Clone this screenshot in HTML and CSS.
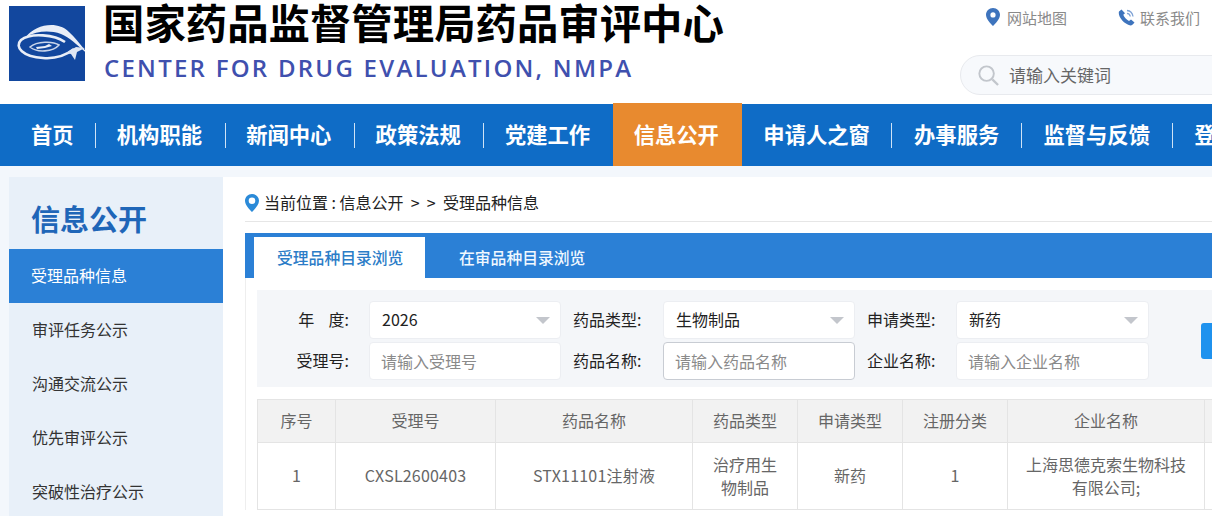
FILE: index.html
```html
<!DOCTYPE html>
<html lang="zh-CN">
<head>
<meta charset="utf-8">
<title>国家药品监督管理局药品审评中心</title>
<link rel="stylesheet" href="styles.css">
</head>
<body>
<header class="header">
  <svg class="logo" viewBox="0 0 76 75" aria-hidden="true">
    <rect width="76" height="75" fill="#12479e"/>
    <path d="M17 31C26 19 48 14 60 26C67 32 73 41 80 49C70 41 62 32 52 28C40 24 28 25 17 31Z" fill="#e9eef7"/>
    <path d="M56 36C46 29 22 26 12 34C5 41 14 51 34 52C46 53 56 50 65 43" fill="none" stroke="#e9eef7" stroke-width="2.6"/>
    <path d="M21 41C28 35 44 35 50 39C44 46 28 47 21 41Z" fill="none" stroke="#c9d5ea" stroke-width="1.6"/>
    <path d="M27 41L36 40L40 38L43 40L36 42L28 43Z" fill="#e9eef7"/>
    <path d="M57 47L67 41L76 42L68 46L66 54L62 48Z" fill="#dfe6f3"/>
  </svg>
  <div class="brand">
    <div class="brand-cn">国家药品监督管理局药品审评中心</div>
    <div class="brand-en">CENTER FOR DRUG EVALUATION, NMPA</div>
  </div>
  <div class="tools">
    <div class="links">
      <a class="link">
        <svg class="link-icon" viewBox="0 0 14 18" aria-hidden="true"><path fill-rule="evenodd" d="M7 0C3 0 0 3 0 6.800C0 11 4.500 15.500 7 18C9.500 15.500 14 11 14 6.800C14 3 11 0 7 0ZM7 4.300A2.600 2.600 0 1 1 7 9.500A2.600 2.600 0 1 1 7 4.300Z" fill="#3e74bd"/></svg>
        网站地图
      </a>
      <a class="link">
        <svg class="link-icon phone" viewBox="0 0 17 17" aria-hidden="true"><path d="M3.500 .5L1 2.500C-.5 7 5.500 15 12.500 16.500C14 16.500 15.500 15 16.500 13.500L13 10.500L11 12C8.500 11 6 8 5.300 5.800L7 4.200Z" fill="#3e74bd"/><path d="M9 1.500C12 1.800 14.500 4 15 7.500M9 4.300C10.800 4.500 12 5.800 12.300 7.500" fill="none" stroke="#7fa3d6" stroke-width="1.300"/></svg>
        联系我们
      </a>
    </div>
    <div class="search">
      <svg class="search-icon" viewBox="0 0 22 22" aria-hidden="true"><circle cx="9" cy="9" r="7.600" fill="none" stroke="#c2c6cc" stroke-width="2"/><path d="M15 15L21 21" stroke="#c2c6cc" stroke-width="2.400"/></svg>
      <input class="search-input" placeholder="请输入关键词">
    </div>
  </div>
</header>

<nav class="nav">
  <a class="nav-item nav-first">首页</a>
  <a class="nav-item nav-early">机构职能</a>
  <a class="nav-item nav-early">新闻中心</a>
  <a class="nav-item nav-early">政策法规</a>
  <a class="nav-item nav-early">党建工作</a>
  <a class="nav-item nav-active">信息公开</a>
  <a class="nav-item nav-after">申请人之窗</a>
  <a class="nav-item">办事服务</a>
  <a class="nav-item">监督与反馈</a>
  <a class="nav-item">登录</a>
</nav>

<div class="layout">
  <aside class="side">
    <h2 class="side-title">信息公开</h2>
    <a class="side-item side-active">受理品种信息</a>
    <a class="side-item">审评任务公示</a>
    <a class="side-item">沟通交流公示</a>
    <a class="side-item">优先审评公示</a>
    <a class="side-item">突破性治疗公示</a>
  </aside>
  <main class="main">
    <div class="crumb">
      <svg class="crumb-icon" viewBox="0 0 14 18" aria-hidden="true"><path fill-rule="evenodd" d="M7 0C3 0 0 3 0 6.800C0 11 4.500 15.500 7 18C9.500 15.500 14 11 14 6.800C14 3 11 0 7 0ZM7 3.500A3.300 3.300 0 1 1 7 10.100A3.300 3.300 0 1 1 7 3.500Z" fill="#2b8ad8"/></svg>
      <span>当前位置 : 信息公开 &nbsp;&gt;&nbsp;&nbsp;&gt;&nbsp; 受理品种信息</span>
    </div>
    <section class="panel">
      <div class="tabs">
        <a class="tab tab-active">受理品种目录浏览</a>
        <a class="tab">在审品种目录浏览</a>
      </div>
      <form class="filter">
        <label class="label label-first">年&nbsp;&nbsp;&nbsp;&nbsp;度:</label>
        <div class="select">2026<i class="arrow"></i></div>
        <label class="label">药品类型:</label>
        <div class="select">生物制品<i class="arrow"></i></div>
        <label class="label">申请类型:</label>
        <div class="select">新药<i class="arrow"></i></div>
        <button class="query" type="button">查询</button>
        <label class="label label-first">受理号:</label>
        <input class="field" placeholder="请输入受理号">
        <label class="label">药品名称:</label>
        <input class="field field-focus" placeholder="请输入药品名称">
        <label class="label">企业名称:</label>
        <input class="field" placeholder="请输入企业名称">
      </form>
      <table class="table">
        <colgroup>
          <col class="c-78"><col class="c-160"><col class="c-197"><col class="c-105"><col class="c-105"><col class="c-105"><col class="c-197"><col class="c-120">
        </colgroup>
        <thead>
          <tr><th>序号</th><th>受理号</th><th>药品名称</th><th>药品类型</th><th>申请类型</th><th>注册分类</th><th>企业名称</th><th></th></tr>
        </thead>
        <tbody>
          <tr><td>1</td><td class="latin">CXSL2600403</td><td class="latin">STX11101注射液</td><td>治疗用生物制品</td><td>新药</td><td>1</td><td class="wide">上海思德克索生物科技有限公司;</td><td></td></tr>
        </tbody>
      </table>
    </section>
  </main>
</div>
</body>
</html>
```

FILE: styles.css
```css
* { box-sizing: border-box; }
html, body {
  margin: 0;
  height: 516px;
  overflow: hidden;
}
body {
  width: 1212px;
  background: #f3f7fc;
  font-family: "Noto Sans CJK SC", "Noto Sans", sans-serif;
  color: #333;
}

.header {
  display: flex;
  height: 104px;
  background: #fff;
  padding: 6px 0 0 9px;
}
.logo { width: 76px; height: 75px; flex: none; }
.brand { margin-left: 19px; flex: none; width: 764px; }
.brand-cn {
  font-size: 41.4px;
  font-weight: 700;
  line-height: 42px;
  color: #000;
  margin: -6px 0 0 -1px;
}
.brand-en {
  font-family: "Open Sans", sans-serif;
  font-size: 24px;
  font-weight: 600;
  line-height: 28px;
  letter-spacing: 2.25px;
  color: #3f50ae;
  margin-top: 12px;
}
.tools {
  flex: none;
  width: 252px;
  margin-left: 92px;
}
.links {
  display: flex;
  height: 24px;
  margin-top: -1px;
  padding-left: 26px;
  gap: 51px;
  font-size: 15px;
  color: #8a8a8a;
}
.link { display: flex; align-items: center; white-space: nowrap; }
.link-icon { width: 14px; height: 18px; margin-right: 7px; flex: none; }
.phone { width: 17px; height: 17px; margin-right: 5px; }
.search {
  display: flex;
  align-items: center;
  width: 290px;
  height: 40px;
  margin-top: 26px;
  padding-left: 17px;
  border: 1px solid #e8eaee;
  border-radius: 20px;
  background: #f7f9fc;
}
.search-icon { width: 21px; height: 21px; flex: none; margin-right: 10px; }
.search-input {
  border: 0;
  background: transparent;
  outline: 0;
  width: 200px;
  height: 36px;
  padding: 0 0 2px;
  font: 17px "Noto Sans CJK SC", sans-serif;
}
.search-input::placeholder { color: #666; opacity: 1; }

.nav {
  display: flex;
  align-items: center;
  height: 62px;
  padding-left: 9px;
  background: #0f6cc6;
  white-space: nowrap;
}
.nav-item {
  flex: none;
  display: flex;
  align-items: center;
  justify-content: center;
  height: 25px;
  padding: 0 21.6px 4px;
  font-size: 21.3px;
  font-weight: 700;
  color: #fff;
  border-left: 1px solid #cfe3f6;
}
.nav-first { border-left: 0; padding-left: 22px; }
.nav-early { padding-left: 20.6px; padding-right: 22.6px; }
.nav-active {
  height: 63px;
  width: 129px;
  padding: 0 2px 2px 0;
  margin-top: -2px;
  border-left: 0;
  background: #e88a2f;
}
.nav-after { border-left: 0; }

.layout {
  display: flex;
  padding: 11px 0 0 9px;
}
.side {
  flex: none;
  width: 214px;
  height: 340px;
  background: #e8f0f9;
}
.side-title {
  margin: 0;
  height: 72px;
  padding: 23px 0 0 22px;
  font-size: 29px;
  line-height: 36px;
  font-weight: 700;
  color: #1f66b8;
}
.side-item {
  display: block;
  height: 54px;
  line-height: 53px;
  padding-left: 23px;
  font-size: 16px;
  color: #333;
}
.side-active { background: #2b80d6; color: #fff; padding-left: 22px; }

.main {
  flex: none;
  width: 1200px;
  height: 340px;
  padding-left: 22px;
  background: #fff;
}
.crumb {
  display: flex;
  align-items: center;
  width: 1000px;
  height: 45px;
  padding-top: 8px;
  border-bottom: 1px solid #e6e6e6;
  font-size: 16px;
  line-height: 22px;
  color: #222;
}
.crumb span { position: relative; top: -1px; }
.crumb-icon { width: 14px; height: 18px; margin-right: 5px; flex: none; }

.panel {
  margin-top: 11px;
  border-left: 1px solid #eee;
}
.tabs {
  display: flex;
  align-items: flex-end;
  height: 45px;
  margin-left: -1px;
  padding-left: 9px;
  background: #2b80d6;
}
.tab {
  height: 41px;
  line-height: 41px;
  font-size: 15.8px;
  font-weight: 500;
  color: #f0f8ff;
  margin-left: 34px;
}
.tab-active {
  width: 171px;
  margin-left: 0;
  padding-left: 23px;
  background: #fff;
  color: #2b7cc7;
}
.filter {
  display: grid;
  grid-template-columns: 100px 192px 102px 192px 101px 193px 132px;
  grid-auto-rows: 38px;
  row-gap: 3px;
  align-items: center;
  height: 97px;
  margin: 12px 0 0 11px;
  padding: 11px 0 0 12px;
  background: #f4f6f9;
}
.label {
  padding: 0 0 2px 12px;
  font-size: 16px;
  color: #222;
  white-space: nowrap;
}
.label-first { padding: 0 20px 2px 0; text-align: right; }
.select, .field {
  position: relative;
  height: 38px;
  padding: 0 11px 1px 12px;
  border: 1px solid #eceef2;
  border-radius: 4px;
  background: #fff;
  font: 16px/35px "Noto Sans CJK SC", sans-serif;
  color: #222;
  outline: 0;
  width: 100%;
}
.field { padding-left: 11px; }
.field::placeholder { color: #8a8a8a; opacity: 1; }
.field-focus { border-color: #c8ccd3; }
.arrow {
  position: absolute;
  right: 10px;
  top: 15px;
  border-style: solid;
  border-width: 7px 7px 0;
  border-color: #c3c6cc transparent transparent;
}
.query {
  grid-row: 1 / span 2;
  grid-column: 7;
  margin-left: 52px;
  width: 80px;
  height: 36px;
  border: 0;
  border-radius: 3px;
  background: #1f92ee;
  color: #fff;
  font: 15px "Noto Sans CJK SC", sans-serif;
}

.table {
  table-layout: fixed;
  border-collapse: collapse;
  width: 1067px;
  margin: 12px 0 0 11px;
  font-size: 16px;
  color: #666;
  text-align: center;
}
.c-78 { width: 78px; }
.c-160 { width: 160px; }
.c-197 { width: 197px; }
.c-105 { width: 105px; }
.c-120 { width: 120px; }
.table th, .table td {
  border: 1px solid #e4e4e4;
  padding: 0 20px;
}
.table th { height: 43px; line-height: 24px; padding-bottom: 2px; background: #f2f2f2; font-weight: 400; }
.table td { height: 67px; line-height: 23px; padding-bottom: 1px; }
.table .latin { padding: 0 4px 1px; letter-spacing: .2px; }
.table .wide { padding: 0 18px 1px; }
```
